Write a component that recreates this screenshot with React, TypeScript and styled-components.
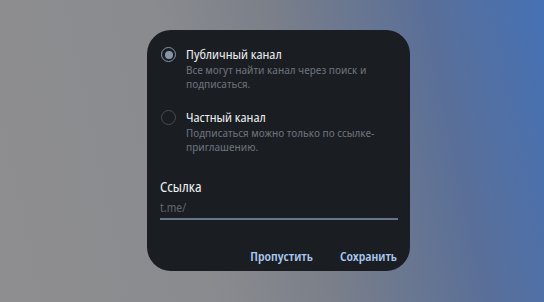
import styled, { createGlobalStyle } from "styled-components";
import { FC } from "react";

const GlobalStyle = createGlobalStyle`
    html, body {
        margin: 0;
        padding: 0;
    }
    body {
        width: 544px;
        height: 302px;
        overflow: hidden;
        font-family: "Noto Sans Display", "Open Sans", sans-serif;
        font-stretch: 87.5%;
    }
`;

const options = [
    {
        title: "Публичный канал",
        text: "Все могут найти канал через поиск и подписаться.",
        checked: true,
    },
    {
        title: "Частный канал",
        text: "Подписаться можно только по ссылке-приглашению.",
        checked: false,
    },
];

const App: FC = () => {
    return (
        <Screen>
            <GlobalStyle />
            <Dialog>
                <OptionList>
                    {options.map((o) => (
                        <Option key={o.title}>
                            <Radio $checked={o.checked} />
                            <OptionText>
                                <OptionTitle>{o.title}</OptionTitle>
                                <OptionDesc>{o.text}</OptionDesc>
                            </OptionText>
                        </Option>
                    ))}
                </OptionList>
                <LinkBlock>
                    <LinkLabel>Ссылка</LinkLabel>
                    <LinkInput placeholder="t.me/" />
                </LinkBlock>
                <Actions>
                    <ActionButton>Пропустить</ActionButton>
                    <ActionButton>Сохранить</ActionButton>
                </Actions>
            </Dialog>
        </Screen>
    );
};

const Screen = styled.div`
    width: 544px;
    height: 302px;
    display: flex;
    justify-content: flex-start;
    align-items: flex-start;
    padding: 30px 0 0 147px;
    box-sizing: border-box;
    background: linear-gradient(258deg, #4571b5 0%, #5a6f98 20%, #7a7f89 45%, #8a8b8f 65%, #8e8e90 100%);
`;

const Dialog = styled.div`
    width: 263px;
    height: 241px;
    box-sizing: border-box;
    background: #1a1d22;
    border-radius: 24px;
    padding: 17px 13px 0 13px;
    display: flex;
    flex-direction: column;
`;

const OptionList = styled.div`
    display: flex;
    flex-direction: column;
    gap: 20px;
`;

const Option = styled.div`
    display: flex;
    align-items: flex-start;
    gap: 10px;
`;

const Radio = styled.div<{ $checked: boolean }>`
    width: 15px;
    height: 15px;
    margin-left: 1px;
    flex-shrink: 0;
    box-sizing: border-box;
    border-radius: 50%;
    border: 1.5px solid ${(p) => (p.$checked ? "#8795ab" : "#474c54")};
    display: flex;
    justify-content: center;
    align-items: center;
    &::after {
        content: "";
        display: ${(p) => (p.$checked ? "block" : "none")};
        width: 8px;
        height: 8px;
        border-radius: 50%;
        background: #8795ab;
    }
`;

const OptionText = styled.div`
    display: flex;
    flex-direction: column;
    width: 200px;
`;

const OptionTitle = styled.div`
    color: #eceef0;
    font-size: 12.5px;
    line-height: 15px;
`;

const OptionDesc = styled.div`
    color: #6b727b;
    font-size: 11.5px;
    line-height: 13.5px;
    margin-top: 1px;
`;

const LinkBlock = styled.div`
    display: flex;
    flex-direction: column;
    margin-top: 25px;
`;

const LinkLabel = styled.div`
    color: #eef0f2;
    font-size: 13.5px;
    line-height: 18px;
`;

const LinkInput = styled.input`
    margin-top: 1px;
    width: 238px;
    box-sizing: border-box;
    background: transparent;
    border: none;
    border-bottom: 2px solid #66758b;
    padding: 2px 0 2px;
    font-family: inherit;
    font-stretch: inherit;
    font-size: 12px;
    line-height: 17px;
    color: #e6e8ea;
    outline: none;
    &::placeholder {
        color: #5d646d;
    }
`;

const Actions = styled.div`
    margin-top: auto;
    margin-bottom: 6px;
    display: flex;
    justify-content: flex-end;
    gap: 27px;
`;

const ActionButton = styled.button`
    background: none;
    border: none;
    padding: 0;
    font-family: inherit;
    font-stretch: inherit;
    font-size: 12px;
    font-weight: 600;
    line-height: 16px;
    color: #a9c7ef;
    cursor: pointer;
`;

export default App;
